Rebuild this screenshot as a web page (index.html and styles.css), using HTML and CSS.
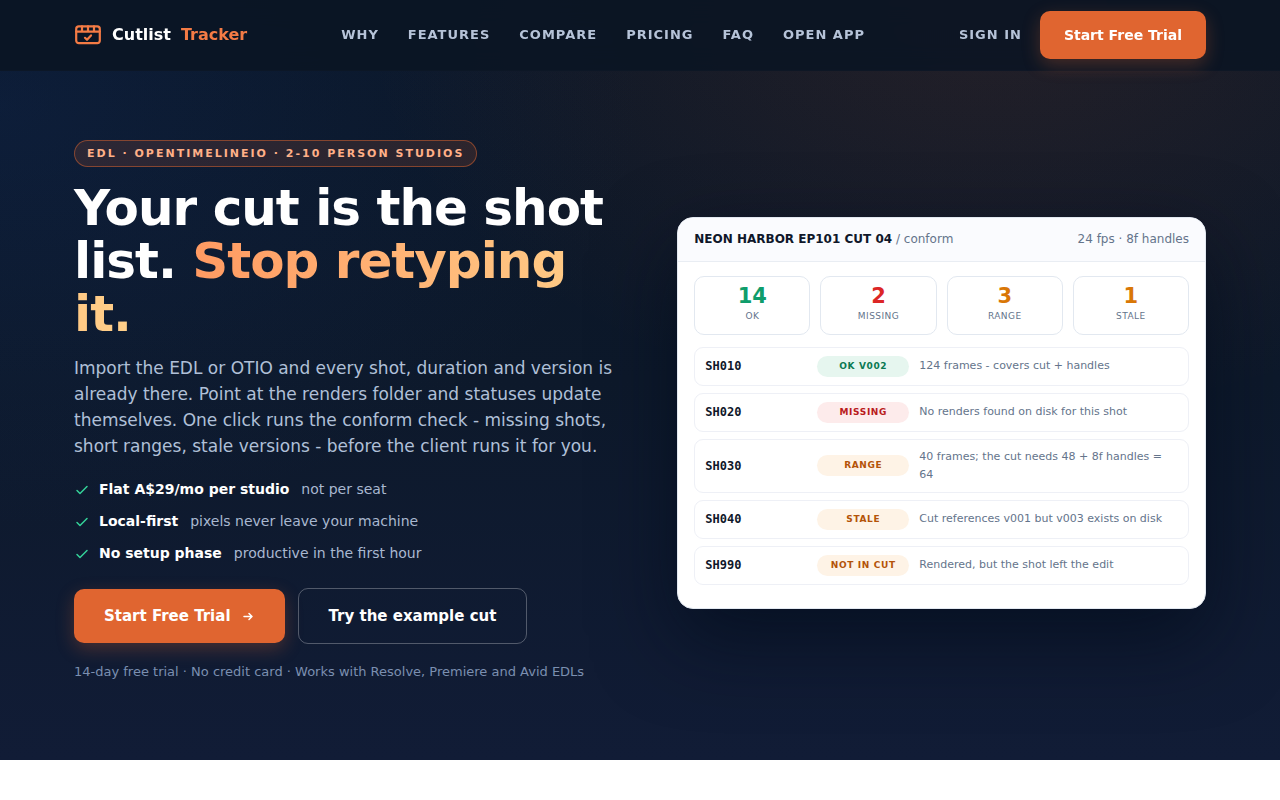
FILE: index.html
```
<!DOCTYPE html>
<html lang="en">
<head>
    <meta charset="UTF-8">
    <meta name="viewport" content="width=device-width, initial-scale=1.0">
    <title>Cutlist Tracker</title>
    <link rel="stylesheet" href="styles.css">
</head>
<body>
    <header class="site-header">
        <div class="container nav">
            <a href="#" class="brand">
                <svg class="brand-icon" viewBox="0 0 28 28" fill="none" stroke="currentColor" stroke-width="2.2" stroke-linecap="round" stroke-linejoin="round" aria-hidden="true">
                    <rect x="2.2" y="5.4" width="23.6" height="16.8" rx="2.6"/>
                    <path d="M2.2 10.6h23.6M8 5.4v5M14 5.4v5M20 5.4v5"/>
                    <path d="M11 16.8l2 2 4-4.4"/>
                </svg>
                <span>Cutlist</span>
                <span class="brand-accent">Tracker</span>
            </a>
            <nav class="nav-links" aria-label="Main">
                <a href="#why">Why</a>
                <a href="#features">Features</a>
                <a href="#compare">Compare</a>
                <a href="#pricing">Pricing</a>
                <a href="#faq">FAQ</a>
                <a href="#app">Open app</a>
            </nav>
            <div class="nav-actions">
                <a href="#signin" class="sign-in">Sign in</a>
                <a href="#trial" class="btn btn-primary btn-nav">Start Free Trial</a>
            </div>
        </div>
    </header>

    <section class="hero">
        <div class="container hero-grid">
            <div class="hero-copy">
                <p class="eyebrow">EDL · OpenTimelineIO · 2-10 person studios</p>
                <h1>Your cut is the shot list. <span class="highlight">Stop retyping it.</span></h1>
                <p class="lead">Import the EDL or OTIO and every shot, duration and version is already there. Point at the renders folder and statuses update themselves. One click runs the conform check - missing shots, short ranges, stale versions - before the client runs it for you.</p>
                <ul class="points">
                    <li>
                        <svg viewBox="0 0 16 16" aria-hidden="true"><path d="M3 9.5l3 3 7-7"/></svg>
                        <strong>Flat A$29/mo per studio</strong>
                        <span>not per seat</span>
                    </li>
                    <li>
                        <svg viewBox="0 0 16 16" aria-hidden="true"><path d="M3 9.5l3 3 7-7"/></svg>
                        <strong>Local-first</strong>
                        <span>pixels never leave your machine</span>
                    </li>
                    <li>
                        <svg viewBox="0 0 16 16" aria-hidden="true"><path d="M3 9.5l3 3 7-7"/></svg>
                        <strong>No setup phase</strong>
                        <span>productive in the first hour</span>
                    </li>
                </ul>
                <div class="cta">
                    <a href="#trial" class="btn btn-primary btn-lg">
                        Start Free Trial
                        <svg class="arrow" viewBox="0 0 14 14" aria-hidden="true"><path d="M3 7.5h8M8 4.5l3 3-3 3"/></svg>
                    </a>
                    <a href="#example" class="btn btn-outline btn-lg">Try the example cut</a>
                </div>
                <p class="fine-print">14-day free trial · No credit card · Works with Resolve, Premiere and Avid EDLs</p>
            </div>

            <div class="panel">
                <div class="panel-head">
                    <span><strong>NEON HARBOR EP101 CUT 04</strong> / conform</span>
                    <span>24 fps · 8f handles</span>
                </div>
                <div class="panel-body">
                    <div class="stats">
                        <div class="stat stat-ok"><b>14</b><span>OK</span></div>
                        <div class="stat stat-missing"><b>2</b><span>Missing</span></div>
                        <div class="stat stat-warn"><b>3</b><span>Range</span></div>
                        <div class="stat stat-warn"><b>1</b><span>Stale</span></div>
                    </div>
                    <ul class="shots">
                        <li>
                            <span class="shot-id">SH010</span>
                            <span class="pill pill-ok">OK v002</span>
                            <span class="note">124 frames - covers cut + handles</span>
                        </li>
                        <li>
                            <span class="shot-id">SH020</span>
                            <span class="pill pill-missing">Missing</span>
                            <span class="note">No renders found on disk for this shot</span>
                        </li>
                        <li>
                            <span class="shot-id">SH030</span>
                            <span class="pill pill-warn">Range</span>
                            <span class="note">40 frames; the cut needs 48 + 8f handles = 64</span>
                        </li>
                        <li>
                            <span class="shot-id">SH040</span>
                            <span class="pill pill-warn">Stale</span>
                            <span class="note">Cut references v001 but v003 exists on disk</span>
                        </li>
                        <li>
                            <span class="shot-id">SH990</span>
                            <span class="pill pill-warn">Not in cut</span>
                            <span class="note">Rendered, but the shot left the edit</span>
                        </li>
                    </ul>
                </div>
            </div>
        </div>
    </section>
</body>
</html>
```

FILE: styles.css
```
* {
    box-sizing: border-box;
}

body {
    margin: 0;
    font-family: "DejaVu Sans", sans-serif;
    font-size: 16px;
    line-height: 26px;
    color: #0f172a;
    background: #fff;
}

a {
    color: inherit;
    text-decoration: none;
}

ul {
    list-style: none;
    margin: 0;
    padding: 0;
}

.container {
    max-width: 1180px;
    margin: 0 auto;
    padding: 0 24px;
}

/* Header */
.site-header {
    position: fixed;
    top: 0;
    left: 0;
    right: 0;
    z-index: 10;
    background: rgba(10, 21, 35, 0.88);
    backdrop-filter: blur(12px);
    border-bottom: 1px solid rgba(255, 255, 255, 0.01);
}

.nav {
    display: flex;
    align-items: center;
    justify-content: space-between;
    height: 70px;
}

.brand {
    display: flex;
    align-items: center;
    gap: 10px;
    font-weight: 700;
    color: #fff;
}

.brand-icon {
    width: 28px;
    height: 28px;
    color: #f47b45;
}

.brand-accent {
    color: #f47b45;
}

.nav-links {
    display: flex;
    gap: 29px;
}

.nav-links a,
.sign-in {
    font-size: 13px;
    font-weight: 600;
    letter-spacing: 1px;
    text-transform: uppercase;
    color: #b6c3d8;
}

.nav-actions {
    display: flex;
    align-items: center;
    gap: 18px;
}

/* Buttons */
.btn {
    display: inline-flex;
    align-items: center;
    justify-content: center;
    border-radius: 10px;
    font-weight: 700;
    color: #fff;
}

.btn-primary {
    background: #e06530;
    box-shadow: 0 6px 18px rgba(224, 101, 48, 0.28);
}

.btn-outline {
    border: 1px solid rgba(255, 255, 255, 0.28);
}

.btn-nav {
    padding: 11px 24px;
    font-size: 14px;
}

.btn-lg {
    gap: 10px;
    padding: 14px 30px;
    font-size: 15px;
}

.arrow {
    width: 14px;
    height: 14px;
    fill: none;
    stroke: currentColor;
    stroke-width: 1.5;
    stroke-linecap: round;
    stroke-linejoin: round;
}

/* Hero */
.hero {
    padding: 140px 0 75px;
    background:
        radial-gradient(ellipse 640px 420px at 78% 0%, rgba(224, 101, 48, 0.12), transparent),
        radial-gradient(ellipse 640px 420px at 0% 14%, rgba(20, 50, 110, 0.25), transparent),
        linear-gradient(#0a1626, #0d192b 50%, #111c36);
}

.hero-grid {
    display: grid;
    grid-template-columns: 102fr 100fr;
    gap: 64px;
    align-items: center;
}

.eyebrow {
    width: fit-content;
    margin: 0;
    padding: 4px 12px;
    border: 1px solid rgba(224, 101, 48, 0.5);
    border-radius: 14px;
    background: rgba(224, 101, 48, 0.15);
    font-size: 11px;
    line-height: 17px;
    font-weight: 700;
    letter-spacing: 2px;
    text-transform: uppercase;
    color: #ffb088;
}

h1 {
    margin: 15px 0 14px;
    font-size: 50px;
    line-height: 53px;
    font-weight: 700;
    letter-spacing: -1px;
    color: #fff;
}

.highlight {
    background: linear-gradient(90deg, #ff9a62, #ffd08a);
    -webkit-background-clip: text;
    background-clip: text;
    color: transparent;
}

.lead {
    margin: 0 0 17px;
    font-size: 17px;
    color: #b0c0d8;
}

.points {
    display: grid;
    gap: 6px;
    margin-bottom: 22px;
    font-size: 14px;
    color: #a9b8d0;
}

.points li {
    display: flex;
    align-items: center;
}

.points svg {
    width: 16px;
    height: 16px;
    margin-right: 9px;
    fill: none;
    stroke: #34d399;
    stroke-width: 1.5;
    stroke-linecap: round;
    stroke-linejoin: round;
}

.points strong {
    margin-right: 12px;
    color: #fff;
}

.cta {
    display: flex;
    flex-wrap: wrap;
    align-items: center;
    gap: 13px;
}

.fine-print {
    margin: 15px 0 0;
    font-size: 13px;
    color: #7b8fb0;
}

/* Conform panel */
.panel {
    overflow: hidden;
    border: 1px solid #e2e8f0;
    border-radius: 16px;
    background: #fff;
    box-shadow: 0 30px 80px rgba(2, 10, 25, 0.6);
}

.panel-head {
    display: flex;
    justify-content: space-between;
    padding: 8px 16px 9px;
    border-bottom: 1px solid #e9edf3;
    background: #fafbfe;
    font-size: 12px;
    color: #64748b;
}

.panel-head strong {
    color: #0f172a;
}

.panel-body {
    padding: 14px 16px 23px;
}

.stats {
    display: grid;
    grid-template-columns: repeat(4, 1fr);
    gap: 10px;
    margin-bottom: 12px;
}

.stat {
    padding: 8px 6px 9px;
    border: 1px solid #e2e8f0;
    border-radius: 10px;
    text-align: center;
}

.stat b,
.stat span {
    display: block;
}

.stat b {
    font-size: 21px;
    line-height: 22px;
}

.stat span {
    font-size: 9px;
    line-height: 18px;
    letter-spacing: 0.05em;
    text-transform: uppercase;
    color: #64748b;
}

.stat-ok b {
    color: #0f9d6b;
}

.stat-missing b {
    color: #dc2626;
}

.stat-warn b {
    color: #d97706;
}

.shots {
    display: grid;
    gap: 7px;
}

.shots li {
    display: grid;
    grid-template-columns: 102px 92px 1fr;
    gap: 10px;
    align-items: center;
    padding: 8px 10px;
    border: 1px solid #eef0f6;
    border-radius: 9px;
}

.shot-id {
    font-family: "DejaVu Sans Mono", monospace;
    font-size: 12px;
    line-height: 18px;
    font-weight: 700;
}

.pill {
    border-radius: 11px;
    font-size: 9px;
    line-height: 21px;
    font-weight: 700;
    letter-spacing: 0.07em;
    text-align: center;
    text-transform: uppercase;
}

.pill-ok {
    background: #e6f6ef;
    color: #0b7a53;
}

.pill-missing {
    background: #fdebeb;
    color: #b91c1c;
}

.pill-warn {
    background: #fef3e6;
    color: #b45309;
}

.note {
    font-size: 11px;
    line-height: 18px;
    color: #64748b;
}
```
